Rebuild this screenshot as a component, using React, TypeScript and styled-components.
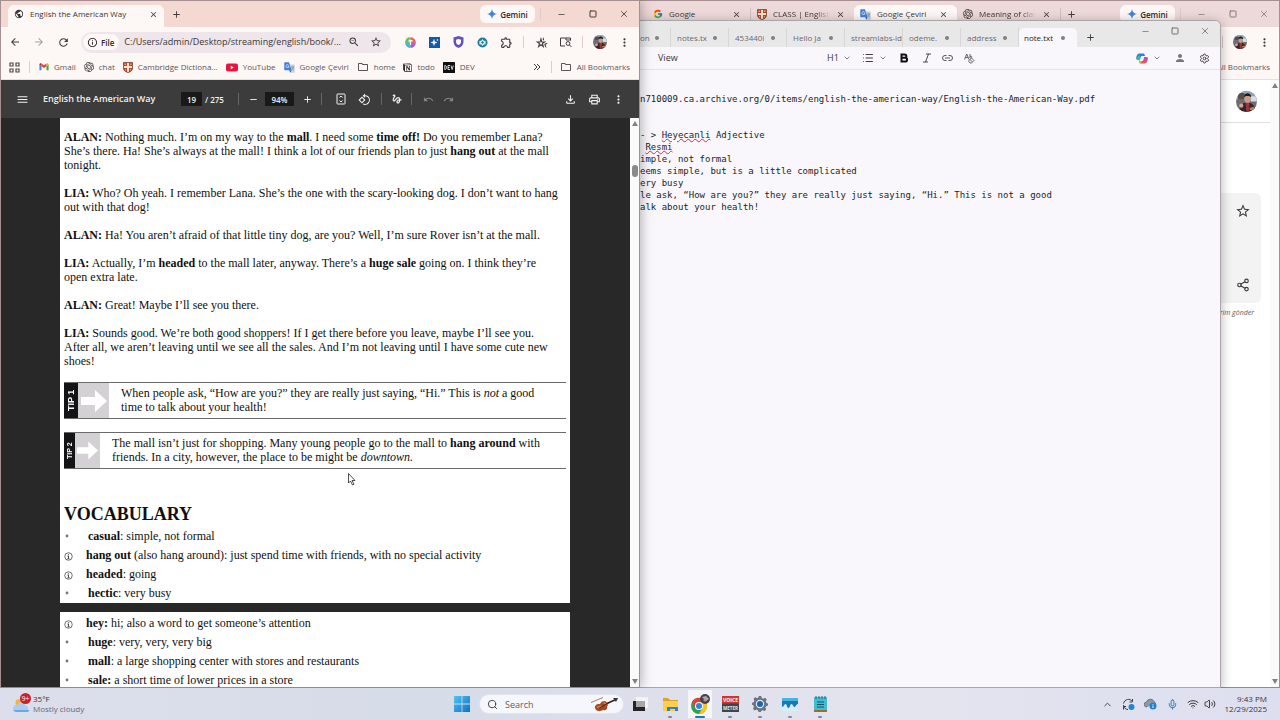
import React from "react";
import styled, { createGlobalStyle, css } from "styled-components";
import {
  MdArrowBack,
  MdArrowForward,
  MdRefresh,
  MdInfoOutline,
  MdStarBorder,
  MdZoomOut,
  MdOutlineExtension,
  MdMoreVert,
  MdMenu,
  MdAdd,
  MdRemove,
  MdClose,
  MdPublic,
  MdOutlineFolder,
  MdOutlineFileDownload,
  MdOutlineHotelClass,
  MdOutlinePrint,
  MdUndo,
  MdRedo,
  MdGesture,
  MdOutlineRotate90DegreesCcw,
  MdPerson,
} from "react-icons/md";
import { SiOpenai, SiNotion } from "react-icons/si";
import { FcGoogle } from "react-icons/fc";
import {
  Minus,
  Square,
  X,
  ChevronDown,
  ChevronUp,
  List,
  Settings,
  Share2,
  Search,
  Wifi,
  Volume2,
  Mic,
} from "lucide-react";

const Global = createGlobalStyle`
  * { box-sizing: border-box; }
  html, body, #root { height: 100%; }
  body {
    margin: 0;
    font-family: "Open Sans", "Noto Sans", sans-serif;
    font-size: 8px;
    color: #3a3536;
    overflow: hidden;
  }
  button, input {
    font: inherit;
    color: inherit;
    background: none;
    border: 0;
    padding: 0;
    margin: 0;
  }
  svg { display: block; flex: none; }
  p, h1, h2, ul { margin: 0; padding: 0; }
`;

/* ---------- desktop ---------- */

const Desktop = styled.div`
  display: flex;
  flex-direction: column;
  height: 100vh;
`;

const Workspace = styled.main`
  position: relative;
  flex: 1;
  min-height: 0;
  overflow: hidden;
  background: #ffffff;
`;

const Window = styled.section<{ $side: "left" | "right" }>`
  position: absolute;
  top: 0;
  bottom: 0;
  width: 50%;
  ${(p) => (p.$side === "left" ? "left: 0; z-index: 3;" : "right: 0; z-index: 1;")}
  display: flex;
  flex-direction: column;
  border: 1px solid #a58f90;
  border-bottom-color: #8c8c90;
  border-left-width: ${(p) => (p.$side === "left" ? "1px" : "0")};
  background: #ffffff;
  ${(p) => p.$side === "left" && "box-shadow: 0 0 12px rgba(0, 0, 0, 0.35);"}
`;

const NoteWindow = styled.section`
  position: absolute;
  z-index: 2;
  top: 20px;
  bottom: 0;
  left: 50%;
  right: 59px;
  display: flex;
  flex-direction: column;
  border: 1px solid #a9a5a8;
  border-left: 0;
  border-radius: 0 6px 0 0;
  background: #f9f7fb;
  box-shadow: 0 2px 12px rgba(0, 0, 0, 0.3);
  overflow: hidden;
`;

/* ---------- shared browser chrome ---------- */

const TabStrip = styled.header<{ $active?: boolean }>`
  display: flex;
  align-items: center;
  height: 26px;
  padding-left: 7px;
  background: ${(p) => (p.$active ? "#f4d9d2" : "#eed9da")};
`;

const Tab = styled.div<{ $active?: boolean; $wide?: boolean }>`
  display: flex;
  align-items: center;
  gap: 6px;
  width: ${(p) => (p.$wide ? "156px" : "103px")};
  height: 22px;
  margin-top: 4px;
  padding: 0 ${(p) => (p.$wide ? "6px" : "9px")} 4px 6px;
  border-radius: 6px 6px 0 0;
  ${(p) => p.$active && "background: #fdf8f6;"}
`;

const TabTitle = styled.span<{ $fade?: boolean }>`
  flex: 1;
  min-width: 0;
  overflow: hidden;
  white-space: nowrap;
  line-height: 12px;
  ${(p) =>
    p.$fade && "mask-image: linear-gradient(90deg, #000 75%, transparent);"}
`;

const IconButton = styled.button<{ $w?: number; $color?: string }>`
  display: flex;
  align-items: center;
  justify-content: center;
  flex: none;
  width: ${(p) => p.$w ?? 24}px;
  height: 20px;
  color: ${(p) => p.$color ?? "#403a3b"};
`;

const Divider = styled.span<{ $gap?: number; $color?: string }>`
  flex: none;
  width: 1px;
  height: 12px;
  margin: 0 ${(p) => p.$gap ?? 5}px;
  background: ${(p) => p.$color ?? "#ddcccb"};
`;

const Spacer = styled.span`
  flex: 1;
`;

const GeminiButton = styled.button`
  display: flex;
  align-items: center;
  justify-content: center;
  gap: 3px;
  width: 55px;
  height: 18px;
  border-radius: 6px;
  background: #fdf8f6;
  font-weight: 600;
  color: #2c2829;
`;

const WindowControls = styled.div<{ $dim?: boolean }>`
  display: flex;
  ${(p) => p.$dim && "opacity: 0.6;"}
`;

const Toolbar = styled.nav`
  display: flex;
  align-items: center;
  height: 30px;
  padding: 0 3px 0 2px;
  background: #fdf8f6;
`;

const Omnibox = styled.div`
  display: flex;
  align-items: center;
  flex: 1;
  min-width: 0;
  height: 21px;
  margin: 0 7px 0 6px;
  padding: 0 4px 0 2px;
  border-radius: 11px;
  background: #eee6eb;
`;

const FileChip = styled.button`
  display: flex;
  align-items: center;
  gap: 3px;
  height: 16px;
  padding: 0 5px 0 4px;
  border-radius: 8px;
  background: #fdf8f6;
  font-weight: 600;
  color: #2c2829;
`;

const UrlInput = styled.input`
  flex: 1;
  min-width: 0;
  margin-left: 5px;
  font-size: 9px;
  line-height: 14px;
  outline: none;
`;

const BookmarkBar = styled.nav`
  display: flex;
  align-items: center;
  height: 23px;
  padding: 0 9px 2px 8px;
  background: #fdf8f6;
  border-bottom: 1px solid #e8dedd;
`;

const Bookmark = styled.a<{ $gap?: number }>`
  display: flex;
  align-items: center;
  gap: 5px;
  margin-right: ${(p) => p.$gap ?? 8}px;
  line-height: 12px;
  white-space: nowrap;
  color: #5c5556;
  text-decoration: none;
`;

const Avatar = styled.svg`
  border-radius: 50%;
`;

/* ---------- PDF viewer ---------- */

const PdfBar = styled.nav`
  display: flex;
  align-items: center;
  flex: none;
  height: 38px;
  padding: 0 9px;
  background: #3c3c3c;
  color: #f1f1f1;
`;

const PdfTitle = styled.h1`
  width: 138px;
  margin-left: 9px;
  font-size: 9px;
  line-height: 14px;
  font-weight: 600;
  white-space: nowrap;
`;

const PdfField = styled.input<{ $w: number }>`
  width: ${(p) => p.$w}px;
  height: 14px;
  background: #191919;
  text-align: center;
  font-size: 8px;
  font-weight: 600;
`;

const PageTotal = styled.span`
  width: 31px;
  margin-left: 3px;
  font-size: 8px;
  font-weight: 600;
  white-space: nowrap;
`;

const PdfBody = styled.div`
  display: flex;
  flex: 1;
  min-height: 0;
`;

const PdfCanvas = styled.div`
  flex: 1;
  min-width: 0;
  padding: 0 60px 0 59px;
  background: #282828;
  overflow: hidden;
`;

const Scrollbar = styled.div`
  display: flex;
  flex-direction: column;
  align-items: center;
  flex: none;
  width: 9px;
  padding: 3px 0;
  background: #fbfafa;
`;

const Thumb = styled.span`
  width: 6px;
  height: 12px;
  margin-top: 39px;
  border-radius: 3px;
  background: #8a8a8a;
`;

const Arrow = styled.span<{ $down?: boolean }>`
  width: 0;
  height: 0;
  border: 3px solid transparent;
  ${(p) =>
    p.$down
      ? "border-top: 5px solid #808080; border-bottom: 0; margin-top: auto;"
      : "border-bottom: 5px solid #808080; border-top: 0;"}
`;

const Page = styled.article<{ $next?: boolean }>`
  padding: ${(p) => (p.$next ? "1px 4px 0" : "12px 4px 1px")};
  margin-bottom: 9px;
  background: #ffffff;
  color: #101010;
  font-family: "Liberation Serif", "Times New Roman", serif;
  font-size: 12px;
  line-height: 14px;
  white-space: nowrap;
`;

const Dialogue = styled.p`
  margin-bottom: 14px;
`;

const Tip = styled.aside`
  display: flex;
  align-items: stretch;
  height: 37px;
  margin-bottom: 13px;
  border: solid #6a6a6a;
  border-width: 1px 0;
  & > p { padding: 3px 0 0 12px; }
`;

const TipLabel = styled.strong<{ $small?: boolean }>`
  display: flex;
  align-items: center;
  justify-content: center;
  width: ${(p) => (p.$small ? "11px" : "14px")};
  background: #141416;
  color: #ffffff;
  font-family: "Liberation Sans", Arial, sans-serif;
  font-size: ${(p) => (p.$small ? "7px" : "9px")};
  line-height: 11px;
  writing-mode: vertical-rl;
  transform: rotate(180deg);
`;

const TipArrow = styled.span<{ $small?: boolean }>`
  display: flex;
  align-items: center;
  justify-content: center;
  width: ${(p) => (p.$small ? "25px" : "31px")};
  background: #d3d1d4;
`;

const Heading = styled.h2`
  margin: 35px 0 2px;
  font-size: 18px;
  line-height: 20px;
`;

const VocabList = styled.ul`
  list-style: none;
`;

const Word = styled.li<{ $info?: boolean }>`
  display: flex;
  align-items: center;
  height: 19px;
  & > svg { width: ${(p) => (p.$info ? "9px" : "7px")}; margin-right: ${(p) => (p.$info ? "13px" : "17px")}; }
  ${(p) => p.$info && css`& > svg { margin-top: 4px; }`}
`;

/* ---------- notepad ---------- */

const NoteTabs = styled.header`
  display: flex;
  align-items: flex-end;
  height: 26px;
  background: #e8e8e9;
  color: #6d696c;
`;

const NoteTab = styled.div<{ $active?: boolean; $first?: boolean; $full?: boolean }>`
  display: flex;
  align-items: center;
  justify-content: space-between;
  width: ${(p) => (p.$first ? "31px" : "58px")};
  height: 19px;
  padding: 0 ${(p) => (p.$full ? 0 : 11)}px 0 ${(p) => (p.$first ? 0 : p.$active ? 5 : 6)}px;
  border-right: 1px solid ${(p) => (p.$active ? "transparent" : "#d8d7d8")};
  ${(p) =>
    p.$active &&
    "background: #f9f7fb; border-radius: 5px 5px 0 0; color: #252325;"}
  & > span { overflow: hidden; white-space: nowrap; line-height: 12px; }
`;

const Dot = styled.i`
  flex: none;
  width: 4px;
  height: 4px;
  border-radius: 50%;
  background: #808080;
`;

const NoteControls = styled.div`
  display: flex;
  align-self: flex-start;
  margin-left: auto;
  opacity: 0.7;
`;

const NoteToolbar = styled.nav`
  display: flex;
  align-items: center;
  flex: none;
  height: 23px;
  padding: 0 8px 0 18px;
  border-bottom: 1px solid #e6e3e7;
`;

const MenuButton = styled.button<{ $w: number }>`
  width: ${(p) => p.$w}px;
  text-align: left;
  font-size: 9px;
  line-height: 14px;
  white-space: nowrap;
`;

const Editor = styled.div`
  flex: 1;
  padding-top: 23px;
  color: #16262b;
  font-family: "DejaVu Sans Mono", "Liberation Mono", monospace;
  font-size: 9px;
  line-height: 12px;
  white-space: pre;
`;

const NoteLine = styled.p`
  min-height: 12px;
`;

const Misspelt = styled.span`
  text-decoration: underline wavy #c8323c 1px;
  text-underline-offset: 0;
`;

/* ---------- translator page ---------- */

const RightBody = styled.div`
  display: flex;
  justify-content: flex-end;
  flex: 1;
  min-height: 0;
`;

const TranslateColumn = styled.div`
  width: 200px;
`;

const AccountRow = styled.div`
  display: flex;
  align-items: center;
  justify-content: flex-end;
  height: 43px;
  padding-right: 13px;
  border-bottom: 1px solid #dedede;
`;

const ResultCard = styled.div`
  display: flex;
  flex-direction: column;
  align-items: flex-end;
  justify-content: space-between;
  height: 110px;
  margin: 70px 9px 5px 0;
  padding: 8px 6px;
  border-radius: 6px;
  background: #f3f3f4;
`;

const FeedbackLink = styled.a`
  display: block;
  padding-right: 16px;
  text-align: right;
  font-size: 7px;
  line-height: 10px;
  font-style: italic;
  color: #5a5a5c;
  text-decoration: none;
`;

/* ---------- taskbar ---------- */

const Taskbar = styled.footer`
  display: grid;
  grid-template-columns: 1fr auto 1fr;
  align-items: center;
  flex: none;
  height: 32px;
  background: linear-gradient(90deg, #dcdeeb, #d7dce9 35%, #e4e4ee 70%, #dddff0);
`;

const Weather = styled.button`
  display: flex;
  align-items: center;
  gap: 1px;
  justify-self: start;
  padding-left: 12px;
  text-align: left;
`;

const TwoLines = styled.span<{ $right?: boolean }>`
  display: flex;
  flex-direction: column;
  font-size: 8px;
  line-height: 10px;
  ${(p) => p.$right && "text-align: right;"}
`;

const Muted = styled.span`
  color: #686873;
`;

const Dock = styled.div`
  display: flex;
  align-items: center;
  padding-left: 2px;
`;

const DockButton = styled.button<{ $state?: "open" | "active" }>`
  position: relative;
  display: flex;
  align-items: center;
  justify-content: center;
  width: 30px;
  height: 28px;
  &::after {
    content: "";
    position: absolute;
    bottom: 0;
    width: ${(p) => (p.$state === "active" ? "10px" : "4px")};
    height: 2px;
    border-radius: 1px;
    background: ${(p) =>
      p.$state === "active" ? "#2277b8" : p.$state === "open" ? "#85868e" : "transparent"};
  }
  ${(p) =>
    p.$state === "active" &&
    "background: linear-gradient(90deg, transparent 3px, #f5f5fa 3px, #f5f5fa 27px, transparent 27px);"}
`;

const SearchBox = styled.label`
  display: flex;
  align-items: center;
  gap: 7px;
  width: 145px;
  height: 20px;
  margin: 0 1px 0 2px;
  padding: 0 4px 0 7px;
  border: 1px solid #e1e3ee;
  border-radius: 10px;
  background: #f6f7fc;
  & > input {
    flex: 1;
    min-width: 0;
    font-size: 9px;
    outline: none;
  }
  & > input::placeholder { color: #5f5f66; opacity: 1; }
`;

const Tray = styled.div`
  display: flex;
  align-items: center;
  justify-self: end;
  padding-right: 13px;
`;

const Clock = styled.button`
  width: 51px;
`;

const Pointer = styled.svg`
  position: absolute;
  z-index: 5;
  top: 473px;
  left: 348px;
`;

/* ---------- drawings ---------- */

const Spark = () => (
  <svg width="10" height="10" viewBox="0 0 24 24">
    <defs>
      <linearGradient id="spark" x1="0" y1="0" x2="1" y2="1">
        <stop offset="0.15" stopColor="#e0483c" />
        <stop offset="0.35" stopColor="#3f83e8" />
        <stop offset="0.65" stopColor="#3f83e8" />
        <stop offset="0.9" stopColor="#45a85c" />
      </linearGradient>
    </defs>
    <path fill="url(#spark)" d="M12 0c1 7 5 11 12 12-7 1-11 5-12 12-1-7-5-11-12-12 7-1 11-5 12-12z" />
  </svg>
);

const Face = ({ size = 14 }: { size?: number }) => (
  <Avatar width={size} height={size} viewBox="0 0 20 20">
    <rect width="20" height="20" fill="#6f6b72" />
    <path d="M0 0h20v8H0z" fill="#8fa7bd" />
    <path d="M2 2h6v6H2z" fill="#5d4b48" />
    <path d="M14 5h6v5h-6z" fill="#d8dde5" />
    <path d="M3 20c0-6 3-9 8-9s7 4 8 9z" fill="#33262d" />
    <path d="M9 11h4l-1 9h-2z" fill="#a53442" />
    <ellipse cx="11" cy="7.5" rx="3" ry="3.8" fill="#cf9a83" />
    <path d="M7.500 6C7.500 1 14.500 1 14.500 6 13 4.500 9 4.500 7.500 6z" fill="#1f1a1d" />
    <circle cx="5" cy="14" r="2" fill="#d7a68e" />
    <path d="M13 16l4-1 1 3h-5z" fill="#c77a4c" />
  </Avatar>
);

const Gmail = () => (
  <svg width="10" height="10" viewBox="0 0 24 24">
    <path fill="#4285f4" d="M1 20V6l5 4v10z" />
    <path fill="#34a853" d="M18 20V10l5-4v14z" />
    <path fill="#c5221f" d="M1 6c0-3 3-4 5-2.500V10L1 6.500z" />
    <path fill="#fbbc04" d="M23 6c0-3-3-4-5-2.500V10l5-3.500z" />
    <path fill="#ea4335" d="M6 3.500l6 4.500 6-4.500V10l-6 4.500L6 10z" />
  </svg>
);

const Crest = () => (
  <svg width="10" height="11" viewBox="0 0 20 22">
    <path d="M1 1h18v11c0 5-4 8-9 9-5-1-9-4-9-9z" fill="#b5472f" />
    <path d="M8 1h4v20l-2 .5L8 21zM1 8h18v4H1z" fill="#f3e4cf" />
    <path d="M3 3h3v3H3zM14 3h3v3h-3zM4 14h2v3H4zM14 14h2v3h-2z" fill="#e7ae52" />
    <path d="M1 1h18v11c0 5-4 8-9 9-5-1-9-4-9-9z" fill="none" stroke="#7d3a2c" strokeWidth="1.500" />
  </svg>
);

const YouTube = () => (
  <svg width="12" height="9" viewBox="0 0 24 18">
    <rect y="1" width="24" height="16" rx="4" fill="#e3173e" />
    <path d="M9.500 5.500v7l6-3.500z" fill="#fff" />
  </svg>
);

const Translate = () => (
  <svg width="11" height="11" viewBox="0 0 22 22">
    <path d="M10 5h10a1.500 1.500 0 0 1 1.500 1.500V20A1.500 1.500 0 0 1 20 21.500h-7z" fill="#cdd2da" />
    <path d="M2 .5h8l5 16H2A1.500 1.500 0 0 1 .5 15V2A1.500 1.500 0 0 1 2 .5z" fill="#3f7ee0" />
    <path d="M10.500 16.500H15l-2.500 5z" fill="#2459b0" />
    <path d="M10 8.200A3 3 0 1 1 9 6M7.300 8.300H10" fill="none" stroke="#fff" strokeWidth="1.300" />
    <path d="M14 10h6M17 9v1M19 10c-.6 3-2 4.500-4 6M15.500 12c1 2 2.500 3.500 4 4" fill="none" stroke="#6c7684" strokeWidth="1.200" />
  </svg>
);

const AppsGrid = () => (
  <svg width="11" height="11" viewBox="0 0 11 11" fill="none" stroke="#504849" strokeWidth="1.200">
    <path d="M1 1h3v3H1zM7 1h3v3H7zM1 7h3v3H1zM7 7h3v3H7z" />
  </svg>
);

const DevLogo = () => (
  <svg width="12" height="11" viewBox="0 0 24 22">
    <rect width="24" height="22" rx="1" fill="#101010" />
    <path
      d="M3.500 7v8h1.500c2.500 0 2.500-8 0-8zM14 7h-4v8h4M10 11h3M16 7l2.300 8 2.300-8"
      fill="none"
      stroke="#fff"
      strokeWidth="1.600"
    />
  </svg>
);

const ColorBall = () => (
  <svg width="11" height="11" viewBox="0 0 22 22">
    <circle cx="11" cy="11" r="10.500" fill="#f0b43c" />
    <path d="M11 .5A10.500 10.500 0 0 1 21.500 11L11 11z" fill="#ef5f6c" />
    <path d="M21.500 11A10.500 10.500 0 0 1 11 21.500V11z" fill="#a85fd6" />
    <path d="M11 21.500A10.500 10.500 0 0 1 .5 11H11z" fill="#3fb7e4" />
    <path d="M.5 11C.5 5 5 .5 9 .7L7 12z" fill="#5ec46a" />
    <path d="M7 8.500c3-2 6-2 8 0M11 8v8" stroke="#fff" strokeWidth="2.400" fill="none" />
  </svg>
);

const BluePlus = () => (
  <svg width="11" height="11" viewBox="0 0 22 22">
    <rect width="22" height="22" fill="#1458a8" />
    <path d="M10 5c.6 4 2 5.400 6 6-4 .6-5.400 2-6 6-.6-4-2-5.400-6-6 4-.6 5.400-2 6-6zM17 4v4M15 6h4" fill="#fff" stroke="#fff" />
  </svg>
);

const Shield = () => (
  <svg width="11" height="12" viewBox="0 0 22 24">
    <path d="M11 0l10 3v8c0 7-4 11-10 13C5 22 1 18 1 11V3z" fill="#6750bd" />
    <path d="M11 6l5 1.500v4c0 3.500-2 5.500-5 6.500-3-1-5-3-5-6.500v-4z" fill="#fff" />
  </svg>
);

const Ring = () => (
  <svg width="11" height="11" viewBox="0 0 22 22">
    <circle cx="11" cy="11" r="10" fill="#237b99" />
    <path d="M11 4l2.500 3.500 4 .5-.5 3 .5 3.500-4 .5L11 18l-2.500-3-4-.5L5 11l-.5-3 4-.5z" fill="#d3edf2" />
    <path d="M11 8l3 3-3 3-3-3z" fill="#237b99" />
  </svg>
);

const SidePanelSearch = () => (
  <svg width="13" height="12" viewBox="0 0 26 24" fill="none" stroke="#403a3b" strokeWidth="2">
    <path d="M12 20H3V4h20v5M14 4v4M14 8h9" />
    <circle cx="18" cy="15" r="3.800" />
    <path d="M21 18l4 4" />
  </svg>
);

const FitPage = () => (
  <svg width="12" height="12" viewBox="0 0 24 24" fill="none" stroke="#f1f1f1" strokeWidth="2">
    <rect x="4" y="2" width="16" height="20" rx="1" />
    <path d="M9 9l3-3 3 3M9 15l3 3 3-3" />
  </svg>
);

const TipArrowShape = ({ size }: { size: number }) => (
  <svg width={size} height={size} viewBox="0 0 26 26">
    <path d="M0 9h14V2l12 11-12 11v-7H0z" fill="#fff" />
  </svg>
);

const Circled = () => (
  <svg height="9" viewBox="0 0 18 18" fill="none" stroke="#333" strokeWidth="1.400">
    <circle cx="9" cy="9" r="7.500" />
    <path d="M7 8h2v5M7 13.500h4M9 4.500v2" strokeWidth="1.800" />
  </svg>
);

const SmallBullet = () => (
  <svg height="8" viewBox="0 0 7 8">
    <circle cx="3" cy="4" r="1.400" fill="#777" />
  </svg>
);

const Copilot = () => (
  <svg width="12" height="11" viewBox="0 0 24 22">
    <path d="M7 1h8c2 0 2 2 3 5h-6c-3 0-3 3-4 8H4c-4 0-4-4-3-7s2-6 6-6z" fill="#2e7fe0" />
    <path d="M5 14c-3 0-4-2-4-4l6-6 2 6-2 6z" fill="#3fbf8a" />
    <path d="M17 21H9c-2 0-2-2-3-5h6c3 0 3-3 4-8h4c4 0 4 4 3 7s-2 6-6 6z" fill="#e2506c" />
    <path d="M6 16h6l-2 5c-3 0-3-2-4-5z" fill="#f2a83a" />
    <path d="M16 8h4c3 0 4 2 3.500 5L17 12z" fill="#a457d6" />
  </svg>
);

const ClearFormat = () => (
  <svg width="11" height="11" viewBox="0 0 22 22" fill="none" stroke="#444" strokeWidth="1.600">
    <path d="M1 13L5.500 2 10 13M2.500 9h6M12 2v8M12 7c4-3 5 3 1 3" />
    <path d="M9 16l6-6 5 5-5 5h-3zM12 13l5 5" />
  </svg>
);

const CloudSun = () => (
  <svg width="20" height="24" viewBox="0 0 40 48">
    <circle cx="15" cy="22" r="8" fill="#f3b33d" />
    <path d="M9 40a7 7 0 0 1 0-14 10 10 0 0 1 18 1 7 7 0 0 1 2 13z" fill="#a9cdf2" />
    <path d="M9 40a7 7 0 0 1-6-4h32c-1 3-3 4-6 4z" fill="#6fa6e0" />
    <circle cx="27" cy="13" r="11" fill="#c9222d" />
    <text x="27" y="18" textAnchor="middle" fontSize="13" fill="#fff">
      9+
    </text>
  </svg>
);

const WindowsLogo = () => (
  <svg width="16" height="16" viewBox="0 0 16 16">
    <defs>
      <linearGradient id="win" x1="0" y1="0" x2="1" y2="1">
        <stop offset="0" stopColor="#4fc5f3" />
        <stop offset="1" stopColor="#0f6fc4" />
      </linearGradient>
    </defs>
    <path d="M0 0h7.600v7.600H0zM8.400 0H16v7.600H8.400zM0 8.400h7.600V16H0zM8.400 8.400H16V16H8.400z" fill="url(#win)" />
  </svg>
);

const Violin = () => (
  <svg width="29" height="16" viewBox="0 0 58 32">
    <path d="M2 13L26 3" stroke="#8a5a3a" strokeWidth="1.500" />
    <path d="M34 15L54 6" stroke="#2e2326" strokeWidth="3" />
    <path d="M46 4h10l-4 8z" fill="#39333a" />
    <path d="M10 24c-1-6 5-9 10-8 3-6 9-8 13-4s3 7 1 9c2 5-3 9-8 7-5 4-14 3-16-4z" fill="#a34a26" />
    <path d="M14 24c2-4 6-4 9-4M26 14c3-1 5 1 5 3" stroke="#d98248" strokeWidth="2.500" fill="none" />
    <path d="M19 24L38 13" stroke="#33201b" strokeWidth="1.600" />
  </svg>
);

const TaskView = () => (
  <svg width="16" height="16" viewBox="0 0 16 16">
    <path d="M4 1h12v11H4z" fill="#f3f3f5" />
    <path d="M4 5h9v6H4z" fill="#a6a6ab" />
    <path d="M1 5h3v6h9v4H1z" fill="#242426" />
  </svg>
);

const Folder = () => (
  <svg width="17" height="16" viewBox="0 0 17 16">
    <path d="M1 2h5l2 2h8v10H1z" fill="#e0a12b" />
    <path d="M1 5h15v10H1z" fill="#f8d04c" />
    <path d="M5 11h11v4H5z" fill="#2f7fd2" />
    <path d="M8 13h5v2H8z" fill="#f8d04c" />
  </svg>
);

const ChromeLogo = () => (
  <svg width="24" height="22" viewBox="2 0 24 22">
    <circle cx="13" cy="13" r="8" fill="#34a04f" />
    <path d="M6 9A8 8 0 0 1 20 9H13A4 4 0 0 0 9.500 15z" fill="#df4233" />
    <path d="M20 9A8 8 0 0 1 13 21L16.500 15A4 4 0 0 0 13 9z" fill="#f8c51c" />
    <circle cx="13" cy="13" r="4" fill="#fff" />
    <circle cx="13" cy="13" r="3" fill="#3b7de6" />
    <circle cx="19" cy="6" r="5" fill="#4c4148" />
    <path d="M16 4l4-1 3 3-3 2z" fill="#9bb0c4" />
    <circle cx="19" cy="7" r="1.600" fill="#c98b76" />
  </svg>
);

const VoiceMeter = () => (
  <svg width="17" height="16" viewBox="0 0 34 32">
    <rect width="34" height="32" fill="#3b4651" />
    <rect width="34" height="15" fill="#cf3630" />
    <text x="17" y="11.500" textAnchor="middle" fontSize="10" fontWeight="700" fill="#fff">
      VOICE
    </text>
    <text x="17" y="27" textAnchor="middle" fontSize="9" fontWeight="700" fill="#e8e8e8">
      METER
    </text>
  </svg>
);

const Gear = () => (
  <svg width="16" height="16" viewBox="0 0 16 16">
    <path
      d="M6.800 0h2.400l.5 2 1.700.8L13.200 1.700l1.500 1.700-.9 2 .7 1.500 1.500.5v2l-2 .8-.7 1.600 1 1.700-1.700 1.600-2-.8-1.500.7-.6 1.500H6.800L6 14.300l-1.500-.7-1.900.8L1 12.700l.9-1.900L1.300 9.300 0 8.800v-2L1.700 6.200l.7-1.600-.9-1.800 1.600-1.500 2 .9 1.300-.6z"
      fill="#69727e"
    />
    <circle cx="8" cy="8" r="4.200" fill="#dfe6ee" />
    <circle cx="8" cy="8" r="3" fill="#1b64ae" />
  </svg>
);

const Wave = () => (
  <svg width="16" height="13" viewBox="0 0 16 13">
    <rect width="16" height="13" rx="1" fill="#1a78b4" />
    <path d="M0 13V9c2 0 2-3 3.500-3S5 10 6.500 10 8 6 9.500 6s1.500 3 3 3S14 6 16 6v7z" fill="#d4eefa" />
    <path d="M0 0h16v3H0z" fill="#45b5e4" />
  </svg>
);

const NotepadIcon = () => (
  <svg width="13" height="16" viewBox="0 0 13 16">
    <rect y="1" width="13" height="14" rx="1" fill="#41bdd2" />
    <path d="M2 0v3M5 0v3M8 0v3M11 0v3" stroke="#14708a" />
    <path d="M3 6h7M3 8.500h7M3 11h7" stroke="#12566c" strokeWidth="1.200" />
    <path d="M0 14h13v2H0z" fill="#a8672c" />
  </svg>
);

const SyncIcon = () => (
  <svg width="13" height="13" viewBox="0 0 26 26" fill="none" stroke="#3c3c44" strokeWidth="2">
    <path d="M3 11C5 2 16 0 21 7V2M21 8h-6M3 14c0 6 5 9 9 9M3 23v-6h5" />
    <circle cx="19" cy="18" r="6" fill="#1f86cf" stroke="none" />
  </svg>
);

const CloudInfo = () => (
  <svg width="13" height="12" viewBox="0 0 26 24">
    <path d="M6 18a5 5 0 0 1-1-10 8 8 0 0 1 15-1 6 6 0 0 1 3 5" fill="#8f99a2" stroke="#59626a" strokeWidth="1.500" />
    <circle cx="18" cy="16" r="7" fill="#1f86cf" />
    <path d="M18 15v5M18 12v1.500" stroke="#fff" strokeWidth="1.800" />
  </svg>
);

/* ---------- pieces ---------- */

const Controls = ({ dim, width = 31 }: { dim?: boolean; width?: number }) => (
  <WindowControls $dim={dim}>
    <IconButton $w={width} aria-label="Minimize"><Minus size={9} /></IconButton>
    <IconButton $w={width} aria-label="Maximize"><Square size={8} strokeWidth={3} /></IconButton>
    <IconButton $w={width} aria-label="Close"><X size={10} /></IconButton>
  </WindowControls>
);

const CloseTab = () => (
  <IconButton $w={9} aria-label="Close tab"><MdClose size={9} /></IconButton>
);

const ChatMark = () => <SiOpenai size={10} color="#3a3536" />;

type Entry = { info?: boolean; word: string; text: string };

const firstWords: Entry[] = [
  { word: "casual", text: ": simple, not formal" },
  { info: true, word: "hang out", text: " (also hang around): just spend time with friends, with no special activity" },
  { info: true, word: "headed", text: ": going" },
  { word: "hectic", text: ": very busy" },
];

const nextWords: Entry[] = [
  { info: true, word: "hey:", text: " hi; also a word to get someone’s attention" },
  { word: "huge", text: ": very, very, very big" },
  { word: "mall", text: ": a large shopping center with stores and restaurants" },
  { word: "sale:", text: " a short time of lower prices in a store" },
];

const Vocabulary = ({ entries }: { entries: Entry[] }) => (
  <VocabList>
    {entries.map((e) => (
      <Word key={e.word} $info={e.info}>
        {e.info ? <Circled /> : <SmallBullet />}
        <span>
          <b>{e.word}</b>
          {e.text}
        </span>
      </Word>
    ))}
  </VocabList>
);

const PdfWindow = () => (
  <Window $side="left">
    <TabStrip $active>
      <Tab $active $wide>
        <MdPublic size={10} />
        <TabTitle>English the American Way</TabTitle>
        <CloseTab />
      </Tab>
      <IconButton aria-label="New tab"><MdAdd size={11} /></IconButton>
      <Spacer />
      <GeminiButton><Spark />Gemini</GeminiButton>
      <Divider $gap={5} />
      <Controls />
    </TabStrip>
    <Toolbar>
      <IconButton aria-label="Back"><MdArrowBack size={12} /></IconButton>
      <IconButton aria-label="Forward" $color="#a79fa0"><MdArrowForward size={12} /></IconButton>
      <IconButton aria-label="Reload"><MdRefresh size={13} /></IconButton>
      <Omnibox>
        <FileChip><MdInfoOutline size={11} />File</FileChip>
        <UrlInput aria-label="Address" readOnly value="C:/Users/admin/Desktop/streaming/english/book/..." />
        <IconButton $w={22} aria-label="Zoom"><MdZoomOut size={12} /></IconButton>
        <IconButton $w={22} aria-label="Bookmark this tab"><MdStarBorder size={12} /></IconButton>
      </Omnibox>
      <IconButton aria-label="Color extension"><ColorBall /></IconButton>
      <IconButton aria-label="Assistant extension"><BluePlus /></IconButton>
      <IconButton aria-label="Shield extension"><Shield /></IconButton>
      <IconButton aria-label="Ring extension"><Ring /></IconButton>
      <IconButton aria-label="Extensions"><MdOutlineExtension size={13} /></IconButton>
      <Divider />
      <IconButton aria-label="Reading list"><MdOutlineHotelClass size={13} /></IconButton>
      <IconButton aria-label="Side panel"><SidePanelSearch /></IconButton>
      <Divider />
      <IconButton aria-label="Profile"><Face /></IconButton>
      <IconButton aria-label="Menu"><MdMoreVert size={13} /></IconButton>
    </Toolbar>
    <BookmarkBar>
      <AppsGrid />
      <Divider $gap={9} />
      <Bookmark href="#gmail"><Gmail />Gmail</Bookmark>
      <Bookmark href="#chat"><ChatMark />chat</Bookmark>
      <Bookmark href="#dictionary"><Crest />Cambridge Dictiona...</Bookmark>
      <Bookmark href="#youtube"><YouTube />YouTube</Bookmark>
      <Bookmark href="#translate"><Translate />Google Çeviri</Bookmark>
      <Bookmark href="#home"><MdOutlineFolder size={12} />home</Bookmark>
      <Bookmark href="#todo"><SiNotion size={9} color="#222" />todo</Bookmark>
      <Bookmark href="#dev"><DevLogo />DEV</Bookmark>
      <Spacer />
      <IconButton $w={12} aria-label="More bookmarks">
        <svg width="8" height="8" viewBox="0 0 8 8" fill="none" stroke="currentColor"><path d="M1 1l3 3-3 3M4 1l3 3-3 3" /></svg>
      </IconButton>
      <Divider $gap={8} />
      <Bookmark href="#all" $gap={0}><MdOutlineFolder size={12} />All Bookmarks</Bookmark>
    </BookmarkBar>
    <PdfBar>
      <IconButton $w={24} $color="#f1f1f1" aria-label="Toggle sidebar"><MdMenu size={13} /></IconButton>
      <PdfTitle>English the American Way</PdfTitle>
      <PdfField $w={21} aria-label="Page number" defaultValue="19" />
      <PageTotal>/ 275</PageTotal>
      <Divider $gap={2} $color="#666" />
      <IconButton $w={24} $color="#f1f1f1" aria-label="Zoom out"><MdRemove size={11} /></IconButton>
      <PdfField $w={29} aria-label="Zoom level" defaultValue="94%" />
      <IconButton $w={26} $color="#f1f1f1" aria-label="Zoom in"><MdAdd size={11} /></IconButton>
      <Divider $gap={1} $color="#666" />
      <IconButton $w={36} $color="#f1f1f1" aria-label="Fit to page"><FitPage /></IconButton>
      <IconButton $w={10} $color="#f1f1f1" aria-label="Rotate"><MdOutlineRotate90DegreesCcw size={13} /></IconButton>
      <Divider $gap={12} $color="#666" />
      <IconButton $w={6} $color="#f1f1f1" aria-label="Draw"><MdGesture size={12} /></IconButton>
      <Divider $gap={11} $color="#666" />
      <IconButton $w={10} $color="#858585" aria-label="Undo"><MdUndo size={11} /></IconButton>
      <IconButton $w={30} $color="#858585" aria-label="Redo"><MdRedo size={11} /></IconButton>
      <Spacer />
      <IconButton $color="#f1f1f1" aria-label="Download"><MdOutlineFileDownload size={13} /></IconButton>
      <IconButton $color="#f1f1f1" aria-label="Print"><MdOutlinePrint size={13} /></IconButton>
      <IconButton $color="#f1f1f1" aria-label="More"><MdMoreVert size={13} /></IconButton>
    </PdfBar>
    <PdfBody>
      <PdfCanvas>
        <Page>
          <Dialogue>
            <b>ALAN:</b> Nothing much. I’m on my way to the <b>mall</b>. I need some <b>time off!</b> Do you remember Lana?<br />
            She’s there. Ha! She’s always at the mall! I think a lot of our friends plan to just <b>hang out</b> at the mall<br />
            tonight.
          </Dialogue>
          <Dialogue>
            <b>LIA:</b> Who? Oh yeah. I remember Lana. She’s the one with the scary-looking dog. I don’t want to hang<br />
            out with that dog!
          </Dialogue>
          <Dialogue>
            <b>ALAN:</b> Ha! You aren’t afraid of that little tiny dog, are you? Well, I’m sure Rover isn’t at the mall.
          </Dialogue>
          <Dialogue>
            <b>LIA:</b> Actually, I’m <b>headed</b> to the mall later, anyway. There’s a <b>huge sale</b> going on. I think they’re<br />
            open extra late.
          </Dialogue>
          <Dialogue>
            <b>ALAN:</b> Great! Maybe I’ll see you there.
          </Dialogue>
          <Dialogue>
            <b>LIA:</b> Sounds good. We’re both good shoppers! If I get there before you leave, maybe I’ll see you.<br />
            After all, we aren’t leaving until we see all the sales. And I’m not leaving until I have some cute new<br />
            shoes!
          </Dialogue>
          <Tip>
            <TipLabel>TIP 1</TipLabel>
            <TipArrow><TipArrowShape size={26} /></TipArrow>
            <p>
              When people ask, “How are you?” they are really just saying, “Hi.” This is <i>not</i> a good<br />
              time to talk about your health!
            </p>
          </Tip>
          <Tip>
            <TipLabel $small>TIP 2</TipLabel>
            <TipArrow $small><TipArrowShape size={21} /></TipArrow>
            <p>
              The mall isn’t just for shopping. Many young people go to the mall to <b>hang around</b> with<br />
              friends. In a city, however, the place to be might be <i>downtown.</i>
            </p>
          </Tip>
          <Heading>VOCABULARY</Heading>
          <Vocabulary entries={firstWords} />
        </Page>
        <Page $next>
          <Vocabulary entries={nextWords} />
        </Page>
      </PdfCanvas>
      <Scrollbar>
        <Arrow />
        <Thumb />
        <Arrow $down />
      </Scrollbar>
    </PdfBody>
  </Window>
);

const TranslateWindow = () => (
  <Window $side="right">
    <TabStrip>
      <Tab><FcGoogle size={10} /><TabTitle>Google</TabTitle><CloseTab /></Tab>
      <Divider $gap={0} $color="#d3bcbf" />
      <Tab><Crest /><TabTitle $fade>CLASS | English</TabTitle><CloseTab /></Tab>
      <Tab $active><Translate /><TabTitle>Google Çeviri</TabTitle><CloseTab /></Tab>
      <Tab><ChatMark /><TabTitle $fade>Meaning of clas</TabTitle><CloseTab /></Tab>
      <Divider $gap={0} $color="#d3bcbf" />
      <IconButton $w={21} aria-label="New tab"><MdAdd size={11} /></IconButton>
      <Spacer />
      <GeminiButton><Spark />Gemini</GeminiButton>
      <Divider $gap={5} />
      <Controls dim />
    </TabStrip>
    <Toolbar>
      <Spacer />
      <Divider />
      <IconButton aria-label="Profile"><Face /></IconButton>
      <IconButton aria-label="Menu"><MdMoreVert size={13} /></IconButton>
    </Toolbar>
    <BookmarkBar>
      <Spacer />
      <Bookmark href="#all-bookmarks" $gap={0}>All Bookmarks</Bookmark>
    </BookmarkBar>
    <RightBody>
      <TranslateColumn>
        <AccountRow><Face size={21} /></AccountRow>
        <ResultCard>
          <IconButton $w={24} aria-label="Save translation"><MdStarBorder size={16} /></IconButton>
          <IconButton $w={24} aria-label="Share translation"><Share2 size={14} /></IconButton>
        </ResultCard>
        <FeedbackLink href="#feedback">Geri bildirim gönder</FeedbackLink>
      </TranslateColumn>
      <Scrollbar>
        <Arrow />
        <Arrow $down />
      </Scrollbar>
    </RightBody>
  </Window>
);

const noteTabs = ["notes.tx", "453440i", "Hello Ja", "streamlabs-id", "odeme.", "address"];

const Notepad = () => (
  <NoteWindow>
    <NoteTabs>
      <NoteTab $first><span>on</span><Dot /></NoteTab>
      {noteTabs.map((t) => (
        <NoteTab key={t} $full={t === "streamlabs-id"}>
          <span>{t}</span>
          {t !== "streamlabs-id" && <Dot />}
        </NoteTab>
      ))}
      <NoteTab $active><span>note.txt</span><Dot /></NoteTab>
      <IconButton $w={26} aria-label="New note"><MdAdd size={11} /></IconButton>
      <NoteControls><Controls width={30} /></NoteControls>
    </NoteTabs>
    <NoteToolbar>
      <MenuButton $w={169}>View</MenuButton>
      <MenuButton $w={12}>H1</MenuButton>
      <IconButton $w={16} aria-label="Heading options"><ChevronDown size={8} /></IconButton>
      <IconButton $w={26} aria-label="List"><List size={12} /></IconButton>
      <IconButton $w={4} aria-label="List options"><ChevronDown size={8} /></IconButton>
      <IconButton $w={38} aria-label="Bold">
        <svg width="10" height="10" viewBox="0 0 20 20" fill="none" stroke="#111" strokeWidth="4"><path d="M5 3h6c5 0 5 6.500 0 6.500H5zM5 9.500h7c5.500 0 5.500 7.500 0 7.500H5z" /></svg>
      </IconButton>
      <IconButton $w={8} aria-label="Italic">
        <svg width="10" height="10" viewBox="0 0 20 20" fill="none" stroke="#333" strokeWidth="1.800"><path d="M8 2h10M2 18h10M13 2L7 18" /></svg>
      </IconButton>
      <IconButton $w={32} aria-label="Link">
        <svg width="11" height="8" viewBox="0 0 22 14" fill="none" stroke="#444" strokeWidth="1.800"><path d="M9 2H6a5 5 0 0 0 0 10h3M13 2h3a5 5 0 0 1 0 10h-3M6 7h10" /></svg>
      </IconButton>
      <IconButton $w={12} aria-label="Clear formatting"><ClearFormat /></IconButton>
      <Spacer />
      <IconButton $w={16} aria-label="Copilot"><Copilot /></IconButton>
      <IconButton $w={14} aria-label="Copilot options"><ChevronDown size={8} /></IconButton>
      <IconButton $w={32} $color="#77747a" aria-label="Account"><MdPerson size={12} /></IconButton>
      <IconButton $w={16} aria-label="Settings"><Settings size={11} /></IconButton>
    </NoteToolbar>
    <Editor>
      <NoteLine>n710009.ca.archive.org/0/items/english-the-american-way/English-the-American-Way.pdf</NoteLine>
      <NoteLine />
      <NoteLine />
      <NoteLine>- &gt; <Misspelt>Heyecanli</Misspelt> Adjective</NoteLine>
      <NoteLine> <Misspelt>Resmi</Misspelt></NoteLine>
      <NoteLine>imple, not formal</NoteLine>
      <NoteLine>eems simple, but is a little complicated</NoteLine>
      <NoteLine>ery busy</NoteLine>
      <NoteLine>le ask, “How are you?” they are really just saying, “Hi.” This is not a good</NoteLine>
      <NoteLine>alk about your health!</NoteLine>
    </Editor>
  </NoteWindow>
);

export default function App() {
  return (
    <>
      <Global />
      <Desktop>
        <Workspace>
          <TranslateWindow />
          <Notepad />
          <PdfWindow />
          <Pointer width="8" height="13" viewBox="0 0 16 26">
            <path d="M1 1v19l4-4 4 8 3-1.500-4-7.500h6z" fill="#fff" stroke="#222" strokeWidth="1.600" />
          </Pointer>
        </Workspace>
        <Taskbar>
          <Weather>
            <CloudSun />
            <TwoLines>
              <span>35°F</span>
              <Muted>Mostly cloudy</Muted>
            </TwoLines>
          </Weather>
          <Dock>
            <DockButton aria-label="Start"><WindowsLogo /></DockButton>
            <SearchBox>
              <Search size={11} />
              <input type="search" placeholder="Search" aria-label="Search" />
              <Violin />
            </SearchBox>
            <DockButton aria-label="Task view"><TaskView /></DockButton>
            <DockButton $state="open" aria-label="File Explorer"><Folder /></DockButton>
            <DockButton $state="active" aria-label="Chrome"><ChromeLogo /></DockButton>
            <DockButton $state="open" aria-label="Voicemeeter"><VoiceMeter /></DockButton>
            <DockButton $state="open" aria-label="Settings"><Gear /></DockButton>
            <DockButton $state="open" aria-label="Audio"><Wave /></DockButton>
            <DockButton $state="open" aria-label="Notepad"><NotepadIcon /></DockButton>
          </Dock>
          <Tray>
            <IconButton $w={21} aria-label="Hidden icons"><ChevronUp size={11} /></IconButton>
            <IconButton $w={21} aria-label="Updates"><SyncIcon /></IconButton>
            <IconButton $w={22} aria-label="Cloud storage"><CloudInfo /></IconButton>
            <IconButton $w={22} $color="#2f6ea5" aria-label="Microphone"><Mic size={11} /></IconButton>
            <IconButton $w={20} aria-label="Network"><Wifi size={12} /></IconButton>
            <IconButton $w={13} aria-label="Volume"><Volume2 size={12} /></IconButton>
            <Clock>
              <TwoLines $right>
                <span>9:43 PM</span>
                <span>12/29/2025</span>
              </TwoLines>
            </Clock>
          </Tray>
        </Taskbar>
      </Desktop>
    </>
  );
}
